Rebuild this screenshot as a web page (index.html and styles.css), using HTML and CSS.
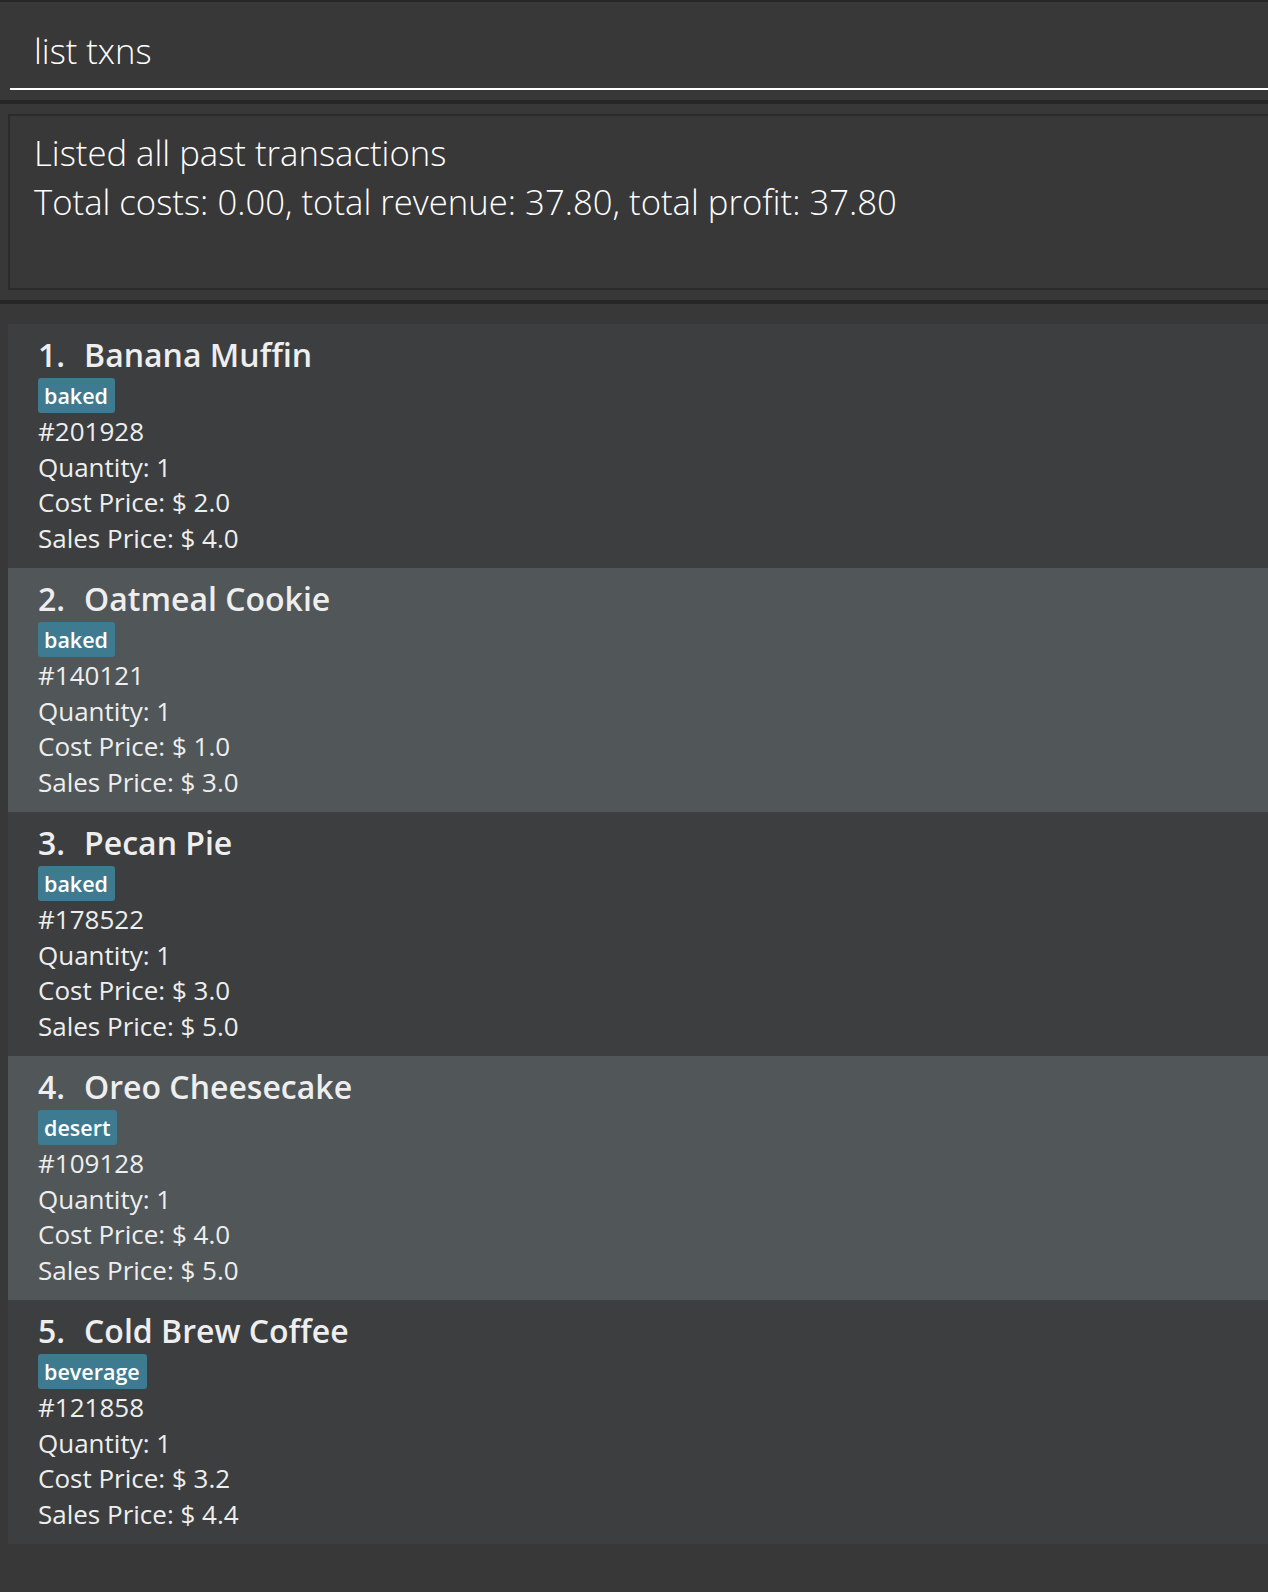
FILE: index.html
```html
<!DOCTYPE html>
<html>
<head>
<meta charset="utf-8">
<link rel="stylesheet" href="styles.css">
</head>
<body>
<div class="app">
  <div class="command-pane">
    <div class="command-box">list txns</div>
  </div>
  <div class="divider"></div>
  <div class="result-pane">
    <div class="result-box">
      <div class="result-line">Listed all past transactions</div>
      <div class="result-line">Total costs: 0.00, total revenue: 37.80, total profit: 37.80</div>
    </div>
  </div>
  <div class="divider"></div>
  <div class="list-pane">
    <div class="cell odd">
      <div class="title"><span class="idx">1.</span><span class="name">Banana Muffin</span></div>
      <div class="tags"><span class="tag">baked</span></div>
      <div class="details">
        <div class="detail">#201928</div>
        <div class="detail">Quantity: 1</div>
        <div class="detail">Cost Price: $ 2.0</div>
        <div class="detail">Sales Price: $ 4.0</div>
      </div>
    </div>
    <div class="cell even">
      <div class="title"><span class="idx">2.</span><span class="name">Oatmeal Cookie</span></div>
      <div class="tags"><span class="tag">baked</span></div>
      <div class="details">
        <div class="detail">#140121</div>
        <div class="detail">Quantity: 1</div>
        <div class="detail">Cost Price: $ 1.0</div>
        <div class="detail">Sales Price: $ 3.0</div>
      </div>
    </div>
    <div class="cell odd">
      <div class="title"><span class="idx">3.</span><span class="name">Pecan Pie</span></div>
      <div class="tags"><span class="tag">baked</span></div>
      <div class="details">
        <div class="detail">#178522</div>
        <div class="detail">Quantity: 1</div>
        <div class="detail">Cost Price: $ 3.0</div>
        <div class="detail">Sales Price: $ 5.0</div>
      </div>
    </div>
    <div class="cell even">
      <div class="title"><span class="idx">4.</span><span class="name">Oreo Cheesecake</span></div>
      <div class="tags"><span class="tag">desert</span></div>
      <div class="details">
        <div class="detail">#109128</div>
        <div class="detail">Quantity: 1</div>
        <div class="detail">Cost Price: $ 4.0</div>
        <div class="detail">Sales Price: $ 5.0</div>
      </div>
    </div>
    <div class="cell odd">
      <div class="title"><span class="idx">5.</span><span class="name">Cold Brew Coffee</span></div>
      <div class="tags"><span class="tag">beverage</span></div>
      <div class="details">
        <div class="detail">#121858</div>
        <div class="detail">Quantity: 1</div>
        <div class="detail">Cost Price: $ 3.2</div>
        <div class="detail">Sales Price: $ 4.4</div>
      </div>
    </div>
  </div>
</div>
</body>
</html>
```
FILE: styles.css
```css
html, body {
  margin: 0;
  padding: 0;
  background: #383838;
}
body {
  width: 1268px;
  height: 1592px;
  overflow: hidden;
  font-family: "Open Sans", "Liberation Sans", sans-serif;
  color: #ffffff;
}
.app {
  display: flex;
  flex-direction: column;
}
.command-pane {
  border-top: 2px solid #262626;
  height: 100px;
  box-sizing: border-box;
  padding: 0 0 0 10px;
}
.command-box {
  height: 88px;
  box-sizing: border-box;
  border-bottom: 2px solid #ffffff;
  padding: 27px 0 0 24px;
  font-size: 34.6px;
  font-weight: 300;
  line-height: 44px;
  color: #ffffff;
}
.divider {
  height: 4px;
  background: #262626;
}
.result-pane {
  height: 196px;
  box-sizing: border-box;
  padding: 10px 0 10px 8px;
}
.result-box {
  height: 176px;
  box-sizing: border-box;
  border: 2px solid #2b2b2b;
  border-right: none;
  padding: 11.5px 0 0 24px;
}
.result-line {
  font-size: 34.7px;
  font-weight: 300;
  line-height: 49.5px;
  color: #ffffff;
  white-space: nowrap;
}
.list-pane {
  padding: 20px 0 0 8px;
  display: flex;
  flex-direction: column;
}
.cell {
  height: 244px;
  box-sizing: border-box;
  padding: 11px 0 0 30px;
}
.cell.odd {
  background: #3c3e3f;
}
.cell.even {
  background: #515658;
}
.title {
  display: flex;
  font-size: 32px;
  font-weight: 600;
  line-height: 40px;
  color: #eeeeee;
  white-space: nowrap;
}
.title .name {
  margin-left: 19px;
}
.tags {
  display: flex;
  margin-top: 3px;
  height: 35px;
}
.tag {
  background: #3e7b91;
  color: #ffffff;
  font-size: 21.5px;
  font-weight: 600;
  line-height: 35px;
  padding: 0 7px 0 6px;
  border-radius: 3px;
}
.details {
  margin-top: 1px;
}
.detail {
  font-size: 26px;
  line-height: 35.5px;
  color: #eeeeee;
}
```
